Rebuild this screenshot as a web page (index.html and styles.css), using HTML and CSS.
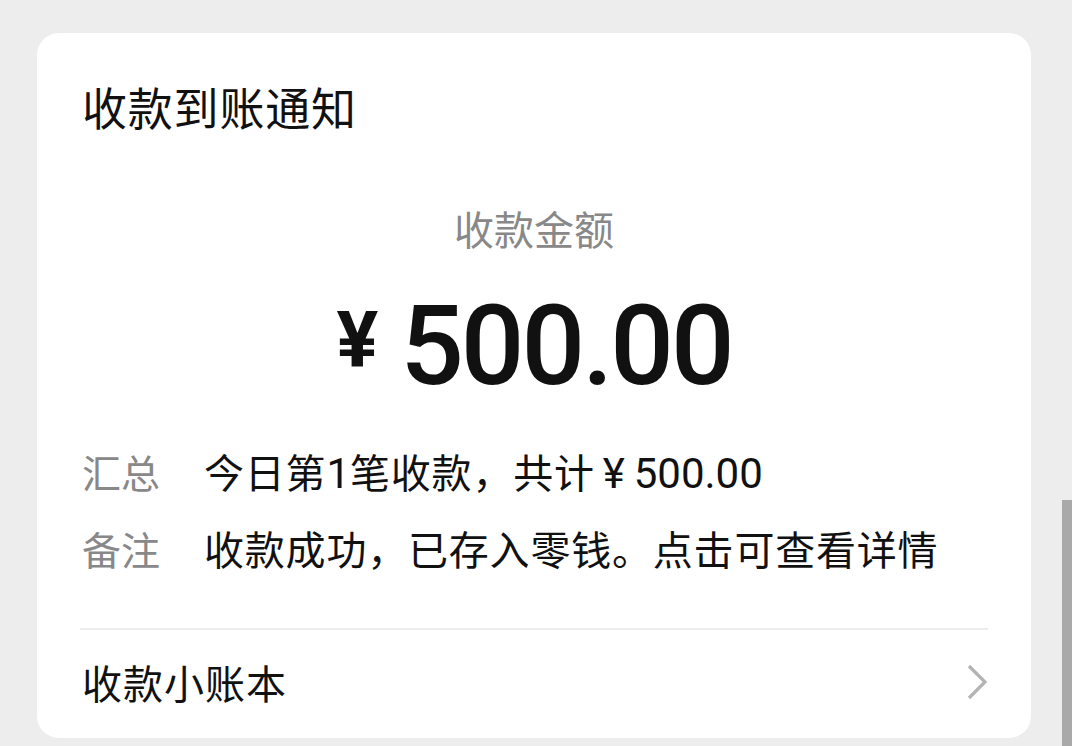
FILE: index.html
```html
<!DOCTYPE html>
<html lang="zh-CN">
<head>
<meta charset="utf-8">
<link rel="stylesheet" href="styles.css">
</head>
<body>
<div class="card">
  <div class="title">收款到账通知</div>
  <div class="amount-label">收款金额</div>
  <div class="amount"><span class="yen">¥</span><span class="num">500.00</span></div>
  <div class="rows">
    <div class="row"><span class="key">汇总</span><span class="val">今日第<span class="d">1</span>笔收款，共计<span class="ry">¥</span><span class="d">500.00</span></span></div>
    <div class="row"><span class="key">备注</span><span class="val">收款成功，已存入零钱。点击可查看详情</span></div>
  </div>
  <div class="footer">
    <span class="flabel">收款小账本</span>
    <svg class="chev" width="22" height="36" viewBox="0 0 22 36"><path d="M3 2 L19 18 L3 34" fill="none" stroke="#b3b3b3" stroke-width="3.2"/></svg>
  </div>
</div>
<div class="scroll"></div>
</body>
</html>
```
FILE: styles.css
```css
html, body {
  margin: 0;
  padding: 0;
  background: #ededed;
  width: 1072px;
  height: 746px;
  overflow: hidden;
  font-family: "Noto Sans CJK SC", "Noto Sans", sans-serif;
  color: #111;
}
.card {
  position: relative;
  margin: 33px 0 0 37px;
  width: 994px;
  height: 705px;
  background: #fff;
  border-radius: 22px;
  padding: 0 43px;
  box-sizing: border-box;
  display: flex;
  flex-direction: column;
}
.title {
  font-size: 45px;
  line-height: 60px;
  letter-spacing: 0.8px;
  margin-top: 44px;
  padding-left: 2px;
}
.amount-label {
  font-size: 40px;
  line-height: 50px;
  color: #888;
  text-align: center;
  margin-top: 66px;
}
.amount {
  display: flex;
  justify-content: center;
  align-items: flex-start;
  margin-top: 38px;
  height: 110px;
}
.yen {
  font-family: "Roboto", sans-serif;
  font-weight: 700;
  font-size: 78px;
  line-height: 78px;
  margin-top: 11px;
  margin-right: 22px;
}
.num {
  font-family: "Roboto", sans-serif;
  font-weight: 500;
  font-size: 112px;
  line-height: 110px;
  letter-spacing: -3px;
}
.rows {
  margin-top: 33px;
  display: flex;
  flex-direction: column;
}
.row {
  display: flex;
  font-size: 40px;
  line-height: 74px;
}
.key {
  color: #888;
  font-size: 39px;
  width: 122px;
  padding-left: 2px;
}
.val {
  color: #111;
  letter-spacing: 0.8px;
}
.d {
  font-family: "Roboto", sans-serif;
  font-size: 42px;
  letter-spacing: 0;
}
.ry {
  font-family: "Roboto", sans-serif;
  font-size: 42px;
  margin: 0 8px 0 8px;
}
.footer {
  margin-top: auto;
  border-top: 2px solid #ececec;
  height: 110px;
  box-sizing: border-box;
  display: flex;
  align-items: center;
  justify-content: space-between;
  padding-bottom: 4px;
}
.flabel {
  font-size: 40px;
  letter-spacing: 1px;
  padding-left: 2px;
}
.chev {
  display: block;
}
.scroll {
  position: absolute;
  left: 1062px;
  top: 500px;
  width: 10px;
  height: 246px;
  background: #a9a9a9;
}
```
